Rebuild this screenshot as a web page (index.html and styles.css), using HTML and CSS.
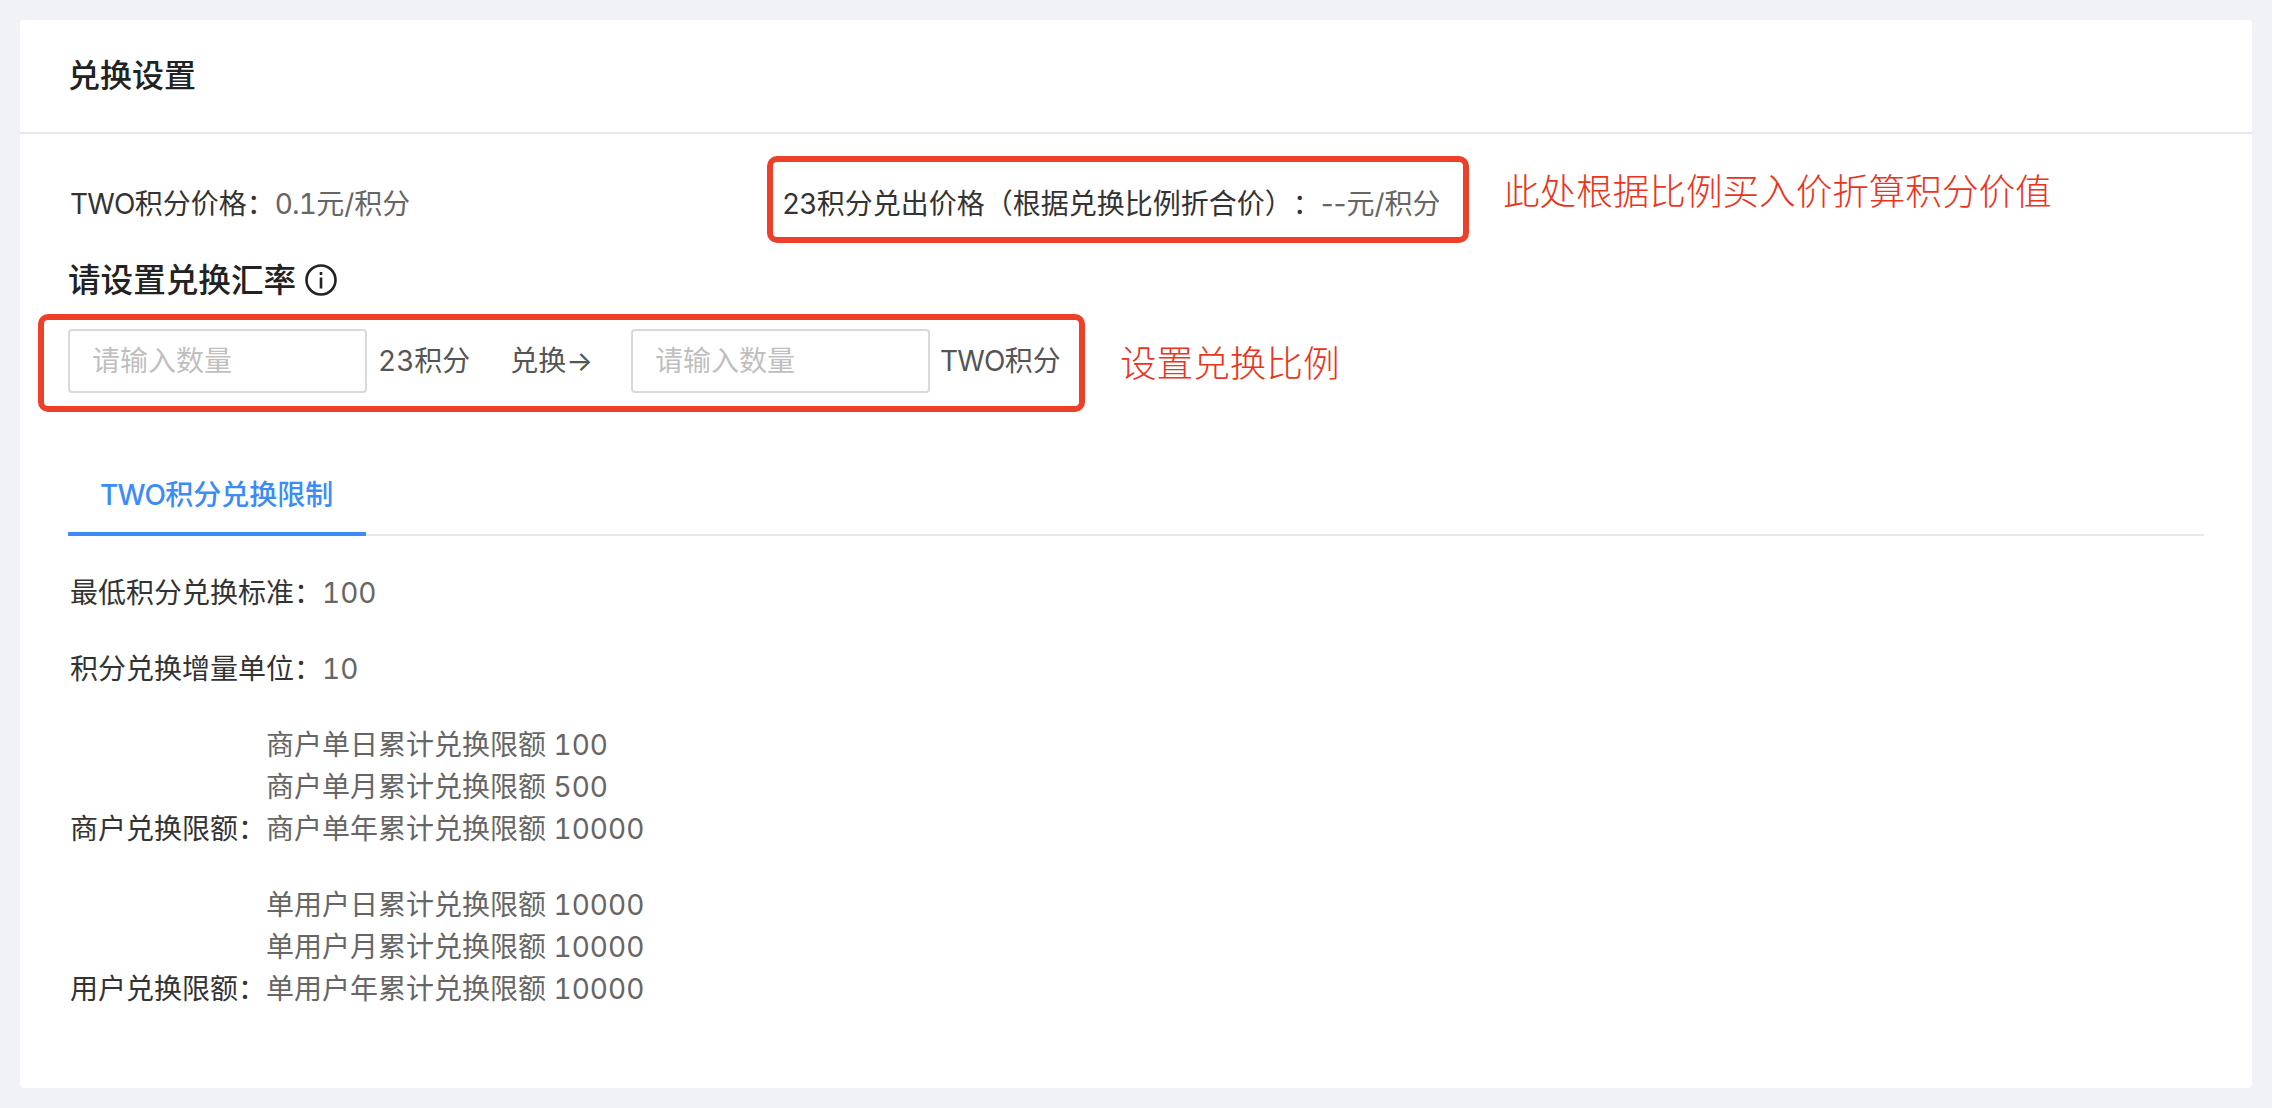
FILE: index.html
```html
<!DOCTYPE html>
<html lang="zh-CN">
<head>
<meta charset="utf-8">
<title>兑换设置</title>
<link rel="stylesheet" href="styles.css">
</head>
<body>
<main class="card">
  <header class="card-header">兑换设置</header>
  <div class="card-body">
    <div class="price-row">
      <div class="price-item"><span class="label"><span class="latin">TWO</span>积分价格：</span><span class="value"><span class="latin">0.1</span>元/积分</span></div>
      <div><span class="label"><span class="latin">23</span>积分兑出价格（根据兑换比例折合价）：</span><span class="value"><span class="dash">--</span>元/积分</span></div>
    </div>
    <h2 class="rate-title">请设置兑换汇率
      <svg class="info-icon" viewBox="0 0 32 32" aria-hidden="true">
        <circle cx="16" cy="16" r="14.5" fill="none" stroke="#222" stroke-width="2.6"/>
        <rect x="14.7" y="13.5" width="2.6" height="11" fill="#222"/>
        <rect x="14.7" y="8" width="2.6" height="3" fill="#222"/>
      </svg>
    </h2>
    <div class="rate-row">
      <input class="rate-input" type="text" placeholder="请输入数量">
      <span class="rate-unit">23积分</span>
      <span class="rate-arrow">兑换→</span>
      <input class="rate-input" type="text" placeholder="请输入数量">
      <span class="rate-unit rate-unit-last"><span class="latin">TWO</span>积分</span>
    </div>
    <nav class="tabs"><div class="tab"><span class="latin">TWO</span>积分兑换限制</div></nav>
    <div class="limits">
      <div class="limit-row"><span class="label">最低积分兑换标准：</span><span class="value">100</span></div>
      <div class="limit-row"><span class="label">积分兑换增量单位：</span><span class="value">10</span></div>
      <div class="limit-row">
        <span class="label limit-label">商户兑换限额：</span>
        <div class="value">
          <div>商户单日累计兑换限额 100</div>
          <div>商户单月累计兑换限额 500</div>
          <div>商户单年累计兑换限额 10000</div>
        </div>
      </div>
      <div class="limit-row">
        <span class="label limit-label">用户兑换限额：</span>
        <div class="value">
          <div>单用户日累计兑换限额 10000</div>
          <div>单用户月累计兑换限额 10000</div>
          <div>单用户年累计兑换限额 10000</div>
        </div>
      </div>
    </div>
  </div>
  <div class="mark mark-price"></div>
  <div class="note note-price">此处根据比例买入价折算积分价值</div>
  <div class="mark mark-rate"></div>
  <div class="note note-rate">设置兑换比例</div>
</main>
</body>
</html>
```

FILE: styles.css
```css
* { box-sizing: border-box; }
html, body { height: 100%; }
body {
  margin: 0;
  padding: 20px;
  background: #f0f2f6;
  color: #333;
  font-family: "Inter", "Noto Sans CJK SC", sans-serif;
  font-size: 28px;
  line-height: 42px;
  font-variant-numeric: tabular-nums;
  text-spacing-trim: space-all;
}
.card {
  position: relative;
  height: 1068px;
  background: #fff;
  border-radius: 4px;
}
.card-header {
  height: 114px;
  padding: 0 48px;
  border-bottom: 2px solid #e8e8e8;
  font-size: 32px;
  font-weight: 500;
  line-height: 112px;
  color: #222;
}
.card-body { padding: 49px 48px 0; }
.price-row { display: flex; padding-left: 2px; }
.price-item { width: 712px; }
.label { color: #333; }
.value { color: #666; }
.latin { letter-spacing: -0.8px; }
.dash { font-variant-numeric: normal; }
.rate-title {
  display: flex;
  align-items: center;
  gap: 9px;
  margin: 33px 0 0;
  height: 44px;
  font-size: 32.6px;
  font-weight: 500;
  line-height: 44px;
  color: #222;
}
.info-icon { width: 32px; height: 32px; }
.rate-row {
  display: flex;
  align-items: center;
  margin-top: 27px;
  color: #555;
}
.rate-input {
  width: 299px;
  height: 64px;
  padding: 0 22px;
  border: 2px solid #d9d9d9;
  border-radius: 4px;
  background: #fff;
  color: #333;
  font: inherit;
  outline: none;
}
.rate-input::placeholder { color: #bfbfbf; opacity: 1; }
.rate-unit { margin-left: 11px; }
.rate-unit-last { margin-left: 10px; }
.rate-arrow { margin: 0 38px 0 40px; }
.tabs {
  display: flex;
  margin-top: 81px;
  border-bottom: 2px solid #e8e8e8;
}
.tab {
  width: 298px;
  margin-bottom: -2px;
  padding: 0 0 16px 32px;
  border-bottom: 4px solid #3b8cf6;
  color: #3b8cf6;
  font-weight: 500;
  white-space: nowrap;
}
.limits {
  display: flex;
  flex-direction: column;
  gap: 34px;
  margin-top: 36px;
  padding-left: 2px;
}
.limit-row { display: flex; align-items: flex-end; }
.limit-label { width: 196px; }
.mark {
  position: absolute;
  border: 6px solid #ee4028;
  border-radius: 10px;
}
.mark-price { left: 747px; top: 136px; width: 702px; height: 87px; }
.mark-rate { left: 18px; top: 294px; width: 1047px; height: 98px; }
.note {
  position: absolute;
  color: #ea3420;
  white-space: nowrap;
  font-weight: 300;
}
.note-price { left: 1483px; top: 149px; font-size: 36.6px; line-height: 46px; }
.note-rate { left: 1100px; top: 321px; font-size: 36.6px; line-height: 46px; }
```
